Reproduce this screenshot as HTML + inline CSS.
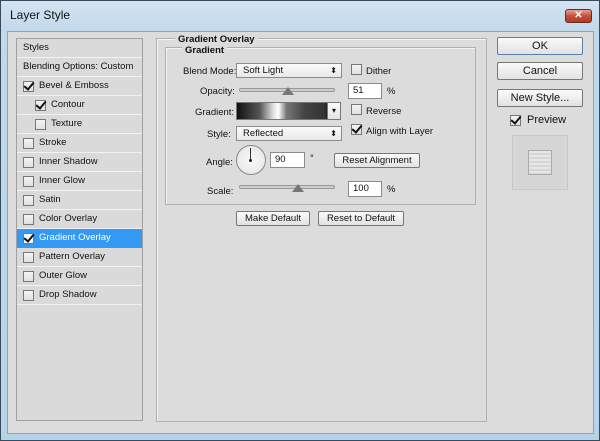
<!DOCTYPE html>
<html><head><style>
*{margin:0;padding:0;box-sizing:border-box}
body{width:600px;height:441px;overflow:hidden;background:#aacde4;font-family:"Liberation Sans",sans-serif;font-size:10px;color:#111;position:relative}
.a{position:absolute}
.frame{left:0;top:0;width:600px;height:441px;border:1px solid #3a4a5a;background:linear-gradient(#d3e3f1,#c2d9ec 30px,#b5d4ea);}
.body{left:7px;top:31px;width:587px;height:403px;background:#dcdcdc;border:1px solid #8ea4b8}
.list{left:16px;top:38px;width:127px;height:383px;border:1px solid #a0a0a0;background:#dadada}
.row{position:absolute;left:0;width:125px;height:19px;border-bottom:1px solid #f2f2f2;line-height:18px;font-size:9.5px}
.cb{position:absolute;width:11px;height:11px;border:1px solid #777;background:linear-gradient(#f4f4f4,#e0e0e0);top:4px}
.chk::after{content:"";position:absolute;left:2px;top:-2px;width:4px;height:8px;border-right:2px solid #111;border-bottom:2px solid #111;transform:rotate(40deg)}
.lbl{position:absolute;font-size:9.5px}
.inp{position:absolute;background:#fff;border:1px solid #8c8c8c;height:16px;font-size:9.5px;line-height:14px;padding-left:4px}
.btn{position:absolute;border:1px solid #777;border-radius:2px;background:linear-gradient(#fafafa,#e2e2e2);text-align:center;font-size:9.5px}
.sel{position:absolute;border:1px solid #8c8c8c;background:linear-gradient(#fbfbfb,#e8e8e8);height:15px;font-size:9.5px;line-height:13px;padding-left:6px}
.sel::after{content:"⬍";position:absolute;right:4px;top:0;font-size:8px}
.track{position:absolute;height:4px;border:1px solid #999;background:#ccc;border-radius:2px}
.thumb{position:absolute;width:0;height:0;border-left:6px solid transparent;border-right:6px solid transparent;border-bottom:8px solid #777}
</style></head><body>
<div class="a frame"></div>
<div class="a" style="left:10px;top:8px;font-size:12px;color:#111">Layer Style</div>
<div class="a" style="left:565px;top:9px;width:27px;height:14px;border:1px solid #6b2a20;border-radius:3px;background:linear-gradient(#e8a090,#c4503c 50%,#b03a26);color:#fff;font-size:10px;font-weight:bold;text-align:center;line-height:12px">✕</div>
<div class="a body"></div>
<div class="a list">
 <div class="row" style="top:0;padding-left:6px">Styles</div>
 <div class="row" style="top:19px;padding-left:6px">Blending Options: Custom</div>
 <div class="row" style="top:38px"><span class="cb chk" style="left:6px"></span><span style="position:absolute;left:22px">Bevel &amp; Emboss</span></div>
 <div class="row" style="top:57px"><span class="cb chk" style="left:18px"></span><span style="position:absolute;left:34px">Contour</span></div>
 <div class="row" style="top:76px"><span class="cb" style="left:18px"></span><span style="position:absolute;left:34px">Texture</span></div>
 <div class="row" style="top:95px"><span class="cb" style="left:6px"></span><span style="position:absolute;left:22px">Stroke</span></div>
 <div class="row" style="top:114px"><span class="cb" style="left:6px"></span><span style="position:absolute;left:22px">Inner Shadow</span></div>
 <div class="row" style="top:133px"><span class="cb" style="left:6px"></span><span style="position:absolute;left:22px">Inner Glow</span></div>
 <div class="row" style="top:152px"><span class="cb" style="left:6px"></span><span style="position:absolute;left:22px">Satin</span></div>
 <div class="row" style="top:171px"><span class="cb" style="left:6px"></span><span style="position:absolute;left:22px">Color Overlay</span></div>
 <div class="row" style="top:190px;background:#3399f3;color:#fff;border-bottom-color:#3399f3"><span class="cb chk" style="left:6px;background:#fff"></span><span style="position:absolute;left:22px">Gradient Overlay</span></div>
 <div class="row" style="top:209px"><span class="cb" style="left:6px"></span><span style="position:absolute;left:22px">Pattern Overlay</span></div>
 <div class="row" style="top:228px"><span class="cb" style="left:6px"></span><span style="position:absolute;left:22px">Outer Glow</span></div>
 <div class="row" style="top:247px"><span class="cb" style="left:6px"></span><span style="position:absolute;left:22px">Drop Shadow</span></div>
</div>
<div class="a" style="left:156px;top:38px;width:331px;height:384px;border:1px solid #b0b0b0;box-shadow:inset 1px 1px 0 #f4f4f4"></div>
<div class="a" style="left:165px;top:47px;width:311px;height:158px;border:1px solid #b0b0b0;box-shadow:inset 1px 1px 0 #f4f4f4"></div>
<div class="a" style="left:175px;top:34px;padding:0 3px;background:#dcdcdc;font-weight:bold;font-size:9.5px">Gradient Overlay</div>
<div class="a" style="left:182px;top:45px;padding:0 3px;background:#dcdcdc;font-weight:bold;font-size:9.5px">Gradient</div>
<div class="lbl" style="left:183px;top:66px">Blend Mode:</div>
<div class="sel" style="left:236px;top:63px;width:106px">Soft Light</div>
<div class="cb" style="left:351px;top:64px"></div><div class="lbl" style="left:366px;top:66px">Dither</div>
<div class="lbl" style="left:200px;top:86px">Opacity:</div>
<div class="track" style="left:239px;top:88px;width:96px"></div>
<div class="thumb" style="left:282px;top:87px"></div>
<div class="inp" style="left:348px;top:83px;width:34px">51</div><div class="lbl" style="left:387px;top:86px">%</div>
<div class="lbl" style="left:195px;top:107px">Gradient:</div>
<div class="a" style="left:236px;top:102px;width:92px;height:18px;border:1px solid #777;background:linear-gradient(90deg,#111,#555 25%,#ddd 40%,#fff 46%,#777 55%,#444 75%,#333 97%,#222)"></div>
<div class="a" style="left:328px;top:102px;width:13px;height:18px;border:1px solid #777;border-left:none;background:linear-gradient(#fafafa,#e2e2e2);font-size:8px;text-align:center;line-height:16px">▾</div>
<div class="cb" style="left:351px;top:104px"></div><div class="lbl" style="left:366px;top:106px">Reverse</div>
<div class="lbl" style="left:207px;top:129px">Style:</div>
<div class="sel" style="left:236px;top:126px;width:106px">Reflected</div>
<div class="cb chk" style="left:351px;top:124px"></div><div class="lbl" style="left:366px;top:126px">Align with Layer</div>
<div class="lbl" style="left:206px;top:157px">Angle:</div>
<div class="a" style="left:236px;top:145px;width:30px;height:30px;border-radius:50%;border:1px solid #888;background:radial-gradient(#fafafa,#e2e2e2)"></div>
<div class="a" style="left:250px;top:148px;width:1px;height:12px;background:#333"></div>
<div class="a" style="left:249px;top:159px;width:3px;height:3px;border-radius:50%;background:#222"></div>
<div class="inp" style="left:270px;top:152px;width:35px">90</div><div class="lbl" style="left:310px;top:153px">°</div>
<div class="btn" style="left:334px;top:153px;width:86px;height:15px;line-height:13px">Reset Alignment</div>
<div class="lbl" style="left:207px;top:186px">Scale:</div>
<div class="track" style="left:239px;top:185px;width:96px"></div>
<div class="thumb" style="left:292px;top:184px"></div>
<div class="inp" style="left:348px;top:181px;width:34px">100</div><div class="lbl" style="left:387px;top:184px">%</div>
<div class="btn" style="left:236px;top:211px;width:74px;height:15px;line-height:13px">Make Default</div>
<div class="btn" style="left:318px;top:211px;width:86px;height:15px;line-height:13px">Reset to Default</div>
<div class="btn" style="left:497px;top:37px;width:86px;height:18px;line-height:16px;font-size:11px;border-color:#5a7fa8">OK</div>
<div class="btn" style="left:497px;top:62px;width:86px;height:18px;line-height:16px;font-size:11px">Cancel</div>
<div class="btn" style="left:497px;top:89px;width:86px;height:18px;line-height:16px;font-size:11px">New Style...</div>
<div class="cb chk" style="left:510px;top:115px"></div><div class="lbl" style="left:527px;top:114px;font-size:11px">Preview</div>
<div class="a" style="left:512px;top:135px;width:56px;height:55px;border:1px solid #c8c8c8;background:#d6d6d6"></div>
<div class="a" style="left:528px;top:150px;width:24px;height:25px;border:1px solid #aaa;background:repeating-linear-gradient(#e6e6e6 0 2px,#d6d6d6 2px 4px)"></div>
</body></html>
